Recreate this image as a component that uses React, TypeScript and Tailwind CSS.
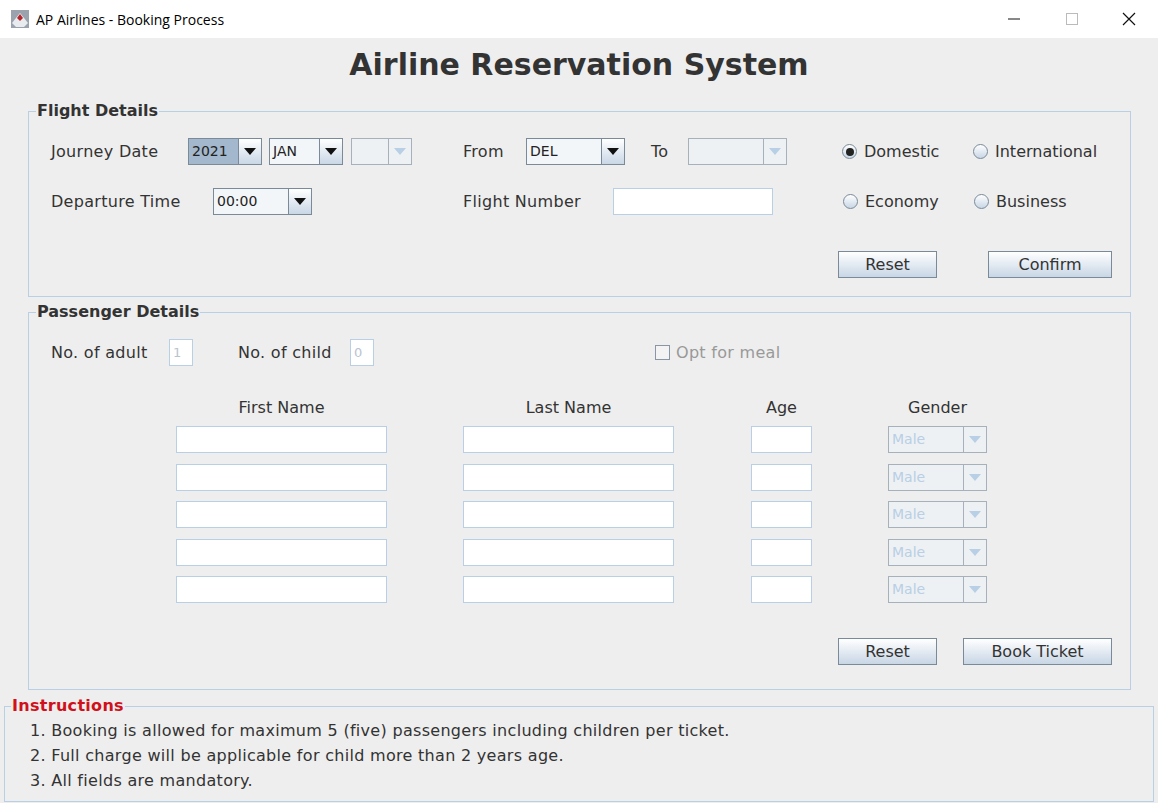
const dv = { fontFamily: '"DejaVu Sans", Verdana, sans-serif' };

const Arrow = ({ disabled }: { disabled?: boolean }) => (
    <svg width="12" height="7" viewBox="0 0 12 7">
        <path d="M0 0 L12 0 L6 7 Z" fill={disabled ? "#b8cfe5" : "#111"} />
    </svg>
);

const Combo = ({ w, text, selected, disabled }: { w: string; text?: string; selected?: boolean; disabled?: boolean }) => (
    <div className={`${w} h-[27px] shrink-0 flex border ${disabled ? "border-[#a7b1bb]" : "border-[#7a8a99]"}`}>
        <div
            className={`flex-1 flex items-center px-[3px] text-[14px] ${selected ? "bg-[#a3b8cc] text-[#222]" : disabled ? "bg-[#eef1f4] text-[#b8cfe5]" : "bg-[#f3f6f9] text-[#222]"}`}
            style={dv}
        >
            {text}
        </div>
        <div className={`w-[23px] flex items-center justify-center border-l ${disabled ? "border-[#a7b1bb] bg-[#eef1f4]" : "border-[#7a8a99] bg-gradient-to-b from-[#ffffff] to-[#c9d7e6]"}`}>
            <Arrow disabled={disabled} />
        </div>
    </div>
);

const Button = ({ w, label, className = "" }: { w: string; label: string; className?: string }) => (
    <div
        className={`${w} h-[27px] shrink-0 flex items-center justify-center border border-[#7a8a99] bg-gradient-to-b from-[#ffffff] to-[#c8d6e5] text-[16px] text-[#333] ${className}`}
        style={dv}
    >
        {label}
    </div>
);

const Radio = ({ label, checked, w }: { label: string; checked?: boolean; w: string }) => (
    <div className={`${w} shrink-0 flex items-center gap-[7px] text-[16px] text-[#333]`} style={dv}>
        <div className="w-[15px] h-[15px] rounded-full border border-[#7a8a99] bg-gradient-to-b from-[#ffffff] to-[#c8d6e5] flex items-center justify-center">
            {checked && <div className="w-[8px] h-[8px] rounded-full bg-[#222]" />}
        </div>
        {label}
    </div>
);

const Field = ({ w, text, dim }: { w: string; text?: string; dim?: boolean }) => (
    <div
        className={`${w} h-[27px] shrink-0 border border-[#b8cfe5] bg-white flex items-center px-[3px] text-[13px] ${dim ? "text-[#b8c4cf]" : "text-[#222]"}`}
        style={dv}
    >
        {text}
    </div>
);

const Label = ({ w, children }: { w: string; children: string }) => (
    <div className={`${w} shrink-0 text-[16px] text-[#333] tracking-[0.3px]`} style={dv}>
        {children}
    </div>
);

export default function App() {
    const rows = [0, 1, 2, 3, 4];
    return (
        <div className="w-[1158px] h-[803px] flex flex-col bg-[#eeeeee] overflow-hidden">
            {/* Title bar */}
            <div className="h-[38px] bg-white flex items-center shrink-0" style={{ fontFamily: '"Open Sans", "Noto Sans", sans-serif' }}>
                <svg className="ml-[10px]" width="20" height="20" viewBox="0 0 20 20">
                    <rect x="1" y="1" width="18" height="18" fill="#9aa3ad" />
                    <path d="M2 14 L10 4 L18 14 L14 18 L6 18 Z" fill="#e8ecef" />
                    <path d="M7 9 L10 5 L13 9 L10 12 Z" fill="#b3262d" />
                </svg>
                <span className="ml-[6px] text-[14px] text-black">AP Airlines - Booking Process</span>
                <div className="ml-auto flex items-center">
                    <svg width="58" height="20" viewBox="0 0 58 20"><path d="M24 10 H36" stroke="#111" strokeWidth="1" /></svg>
                    <svg width="58" height="20" viewBox="0 0 58 20"><rect x="24.5" y="4.5" width="11" height="11" fill="none" stroke="#bbb" /></svg>
                    <svg width="58" height="20" viewBox="0 0 58 20"><path d="M23 4 L35 16 M35 4 L23 16" stroke="#111" strokeWidth="1.2" /></svg>
                </div>
            </div>

            {/* Heading */}
            <div className="h-[52px] flex items-center justify-center text-[30px] font-bold text-[#333]" style={dv}>
                Airline Reservation System
            </div>

            {/* Flight details */}
            <div className="relative mt-[21px] ml-[28px] w-[1103px] h-[186px] border border-[#b8cfe5] pt-[26px] flex flex-col">
                <div className="absolute -top-[10px] left-[7px] px-[1px] bg-[#eeeeee] text-[16px] font-bold text-[#333] leading-[18px]" style={dv}>
                    Flight Details
                </div>
                <div className="h-[27px] flex items-center pl-[22px]">
                    <Label w="w-[137px]">Journey Date</Label>
                    <Combo w="w-[74px]" text="2021" selected />
                    <Combo w="w-[74px] ml-[7px]" text="JAN" />
                    <Combo w="w-[61px] ml-[8px]" disabled />
                    <Label w="w-[63px] ml-[51px]">From</Label>
                    <Combo w="w-[99px]" text="DEL" />
                    <Label w="w-[37px] ml-[26px]">To</Label>
                    <Combo w="w-[99px]" disabled />
                    <div className="ml-[55px] flex">
                        <Radio w="w-[131px]" label="Domestic" checked />
                        <Radio w="w-[140px]" label="International" />
                    </div>
                </div>
                <div className="h-[27px] mt-[23px] flex items-center pl-[22px]">
                    <Label w="w-[162px]">Departure Time</Label>
                    <Combo w="w-[99px]" text="00:00" />
                    <Label w="w-[150px] ml-[151px]">Flight Number</Label>
                    <Field w="w-[160px]" />
                    <div className="ml-[70px] flex">
                        <Radio w="w-[131px]" label="Economy" />
                        <Radio w="w-[140px]" label="Business" />
                    </div>
                </div>
                <div className="h-[27px] mt-[36px] flex pl-[809px]">
                    <Button w="w-[99px]" label="Reset" />
                    <Button w="w-[124px]" className="ml-[51px]" label="Confirm" />
                </div>
            </div>

            {/* Passenger details */}
            <div className="relative mt-[15px] ml-[28px] w-[1103px] h-[378px] border border-[#b8cfe5] pt-[26px] flex flex-col">
                <div className="absolute -top-[10px] left-[7px] px-[1px] bg-[#eeeeee] text-[16px] font-bold text-[#333] leading-[18px]" style={dv}>
                    Passenger Details
                </div>
                <div className="h-[27px] flex items-center pl-[22px]">
                    <Label w="w-[118px]">No. of adult</Label>
                    <Field w="w-[24px]" text="1" dim />
                    <Label w="w-[112px] ml-[45px]">No. of child</Label>
                    <Field w="w-[24px]" text="0" dim />
                    <div className="ml-[281px] flex items-center gap-[6px] text-[16px] text-[#999] tracking-[0.3px]" style={dv}>
                        <div className="w-[15px] h-[15px] border border-[#8a96a3] bg-[#f3f3f3]" />
                        Opt for meal
                    </div>
                </div>
                <div className="h-[20px] mt-[32px] flex items-center pl-[147px] text-[16px] text-[#333]" style={dv}>
                    <div className="w-[211px] text-center">First Name</div>
                    <div className="w-[211px] ml-[76px] text-center">Last Name</div>
                    <div className="w-[61px] ml-[77px] text-center">Age</div>
                    <div className="w-[99px] ml-[76px] text-center">Gender</div>
                </div>
                <div className="mt-[8px] flex flex-col gap-[10.5px]">
                    {rows.map((r) => (
                        <div key={r} className="h-[27px] flex pl-[147px]">
                            <Field w="w-[211px]" />
                            <Field w="w-[211px] ml-[76px]" />
                            <Field w="w-[61px] ml-[77px]" />
                            <Combo w="w-[99px] ml-[76px]" text="Male" disabled />
                        </div>
                    ))}
                </div>
                <div className="h-[28px] mt-[35px] flex pl-[809px]">
                    <Button w="w-[99px]" label="Reset" />
                    <Button w="w-[149px]" className="ml-[26px]" label="Book Ticket" />
                </div>
            </div>

            {/* Instructions */}
            <div className="relative mt-[16px] ml-[4px] w-[1150px] h-[96px] border border-[#b8cfe5] pt-[11px] pl-[25px] text-[16px] text-[#333] leading-[25px] tracking-[0.3px]" style={dv}>
                <div className="absolute -top-[10px] left-[6px] px-[1px] bg-[#eeeeee] text-[16px] font-bold text-[#d0111b] leading-[18px]">
                    Instructions
                </div>
                <div>1. Booking is allowed for maximum 5 (five) passengers including children per ticket.</div>
                <div>2. Full charge will be applicable for child more than 2 years age.</div>
                <div>3. All fields are mandatory.</div>
            </div>
        </div>
    );
}
